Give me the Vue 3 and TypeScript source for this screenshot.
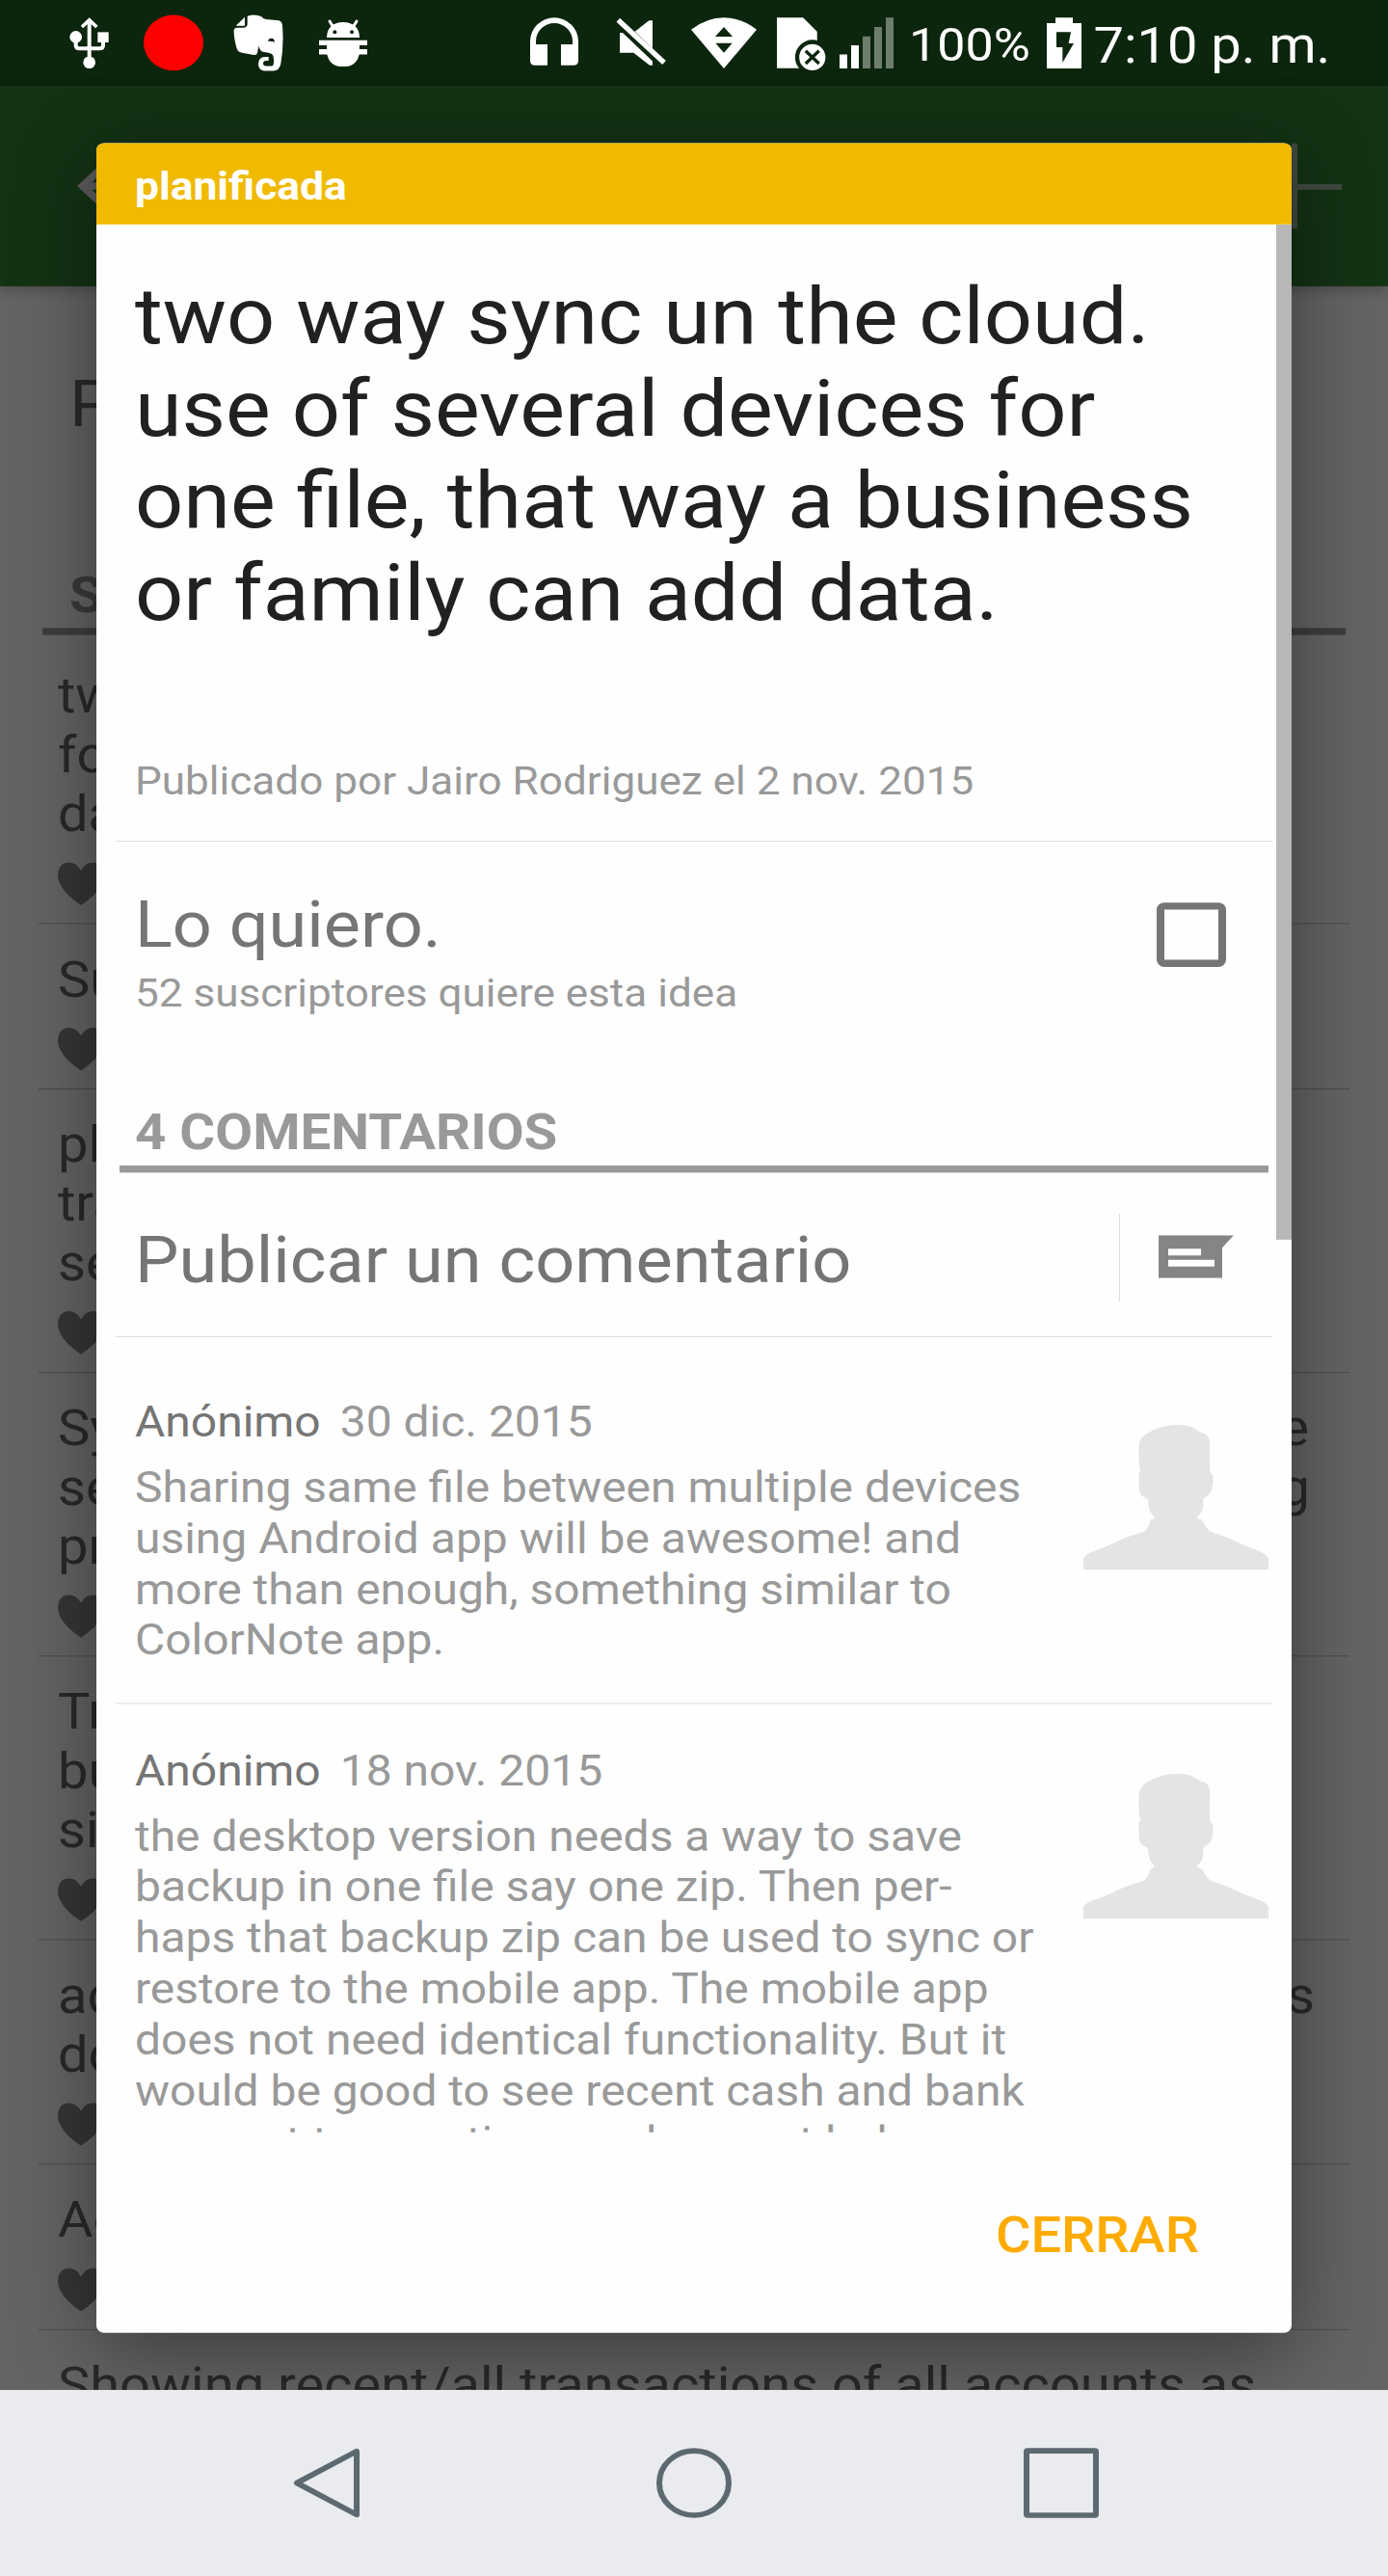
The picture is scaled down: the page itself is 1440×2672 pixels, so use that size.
<script setup lang="ts">
interface Idea {
  lines: { text: string; tail?: string; end?: number }[]
}

interface Comment {
  author: string
  date: string
  lines: string[]
}

// `tail` is pushed to the far side of a line that is `end` pixels wide
const ideas: Idea[] = [
  {
    lines: [
      { text: 'two way' },
      { text: 'for one' },
      { text: 'data.' },
    ],
  },
  { lines: [{ text: 'Sum' }] },
  { lines: [{ text: 'plan' }, { text: 'trans' }, { text: 'select' }] },
  {
    lines: [
      { text: 'Sync', tail: 'the', end: 1298 },
      { text: 'set', tail: 'using', end: 1299 },
      { text: 'pro' },
    ],
  },
  { lines: [{ text: 'Tra' }, { text: 'but' }, { text: 'sin' }] },
  { lines: [{ text: 'add', tail: 'as', end: 1304 }, { text: 'do' }] },
  { lines: [{ text: 'Add' }] },
  { lines: [{ text: 'Showing recent/all transactions of all accounts as' }] },
]

const titleLines: string[] = [
  'two way sync un the cloud.',
  'use of several devices for',
  'one file, that way a business',
  'or family can add data.',
]

const comments: Comment[] = [
  {
    author: 'Anónimo',
    date: '30 dic. 2015',
    lines: [
      'Sharing same file between multiple devices',
      'using Android app will be awesome! and',
      'more than enough, something similar to',
      'ColorNote app.',
    ],
  },
  {
    author: 'Anónimo',
    date: '18 nov. 2015',
    lines: [
      'the desktop version needs a way to save',
      'backup in one file say one zip. Then per-',
      'haps that backup zip can be used to sync or',
      'restore to the mobile app. The mobile app',
      'does not need identical functionality. But it',
      'would be good to see recent cash and bank',
      'account transactions and current balance',
    ],
  },
]
</script>

<template>
  <div class="viewport">
    <div class="device">
      <header class="status">
        <svg class="ic usb" viewBox="216 0 123 267" preserveAspectRatio="none">
          <g fill="none" stroke="#fff" stroke-width="12">
            <path d="M278 62V190" />
            <path d="M236 115V141Q236 151 247 151H310Q321 151 321 141V125" />
            <path d="M255 84L278 62L301 84" stroke-width="11" />
          </g>
          <circle cx="236" cy="115" r="19" fill="#fff" />
          <circle cx="278" cy="194" r="19" fill="#fff" />
          <path d="M304 100H338V132H304z" fill="#fff" />
        </svg>
        <svg class="ic rec" viewBox="447 0 186 267" preserveAspectRatio="none">
          <ellipse cx="540" cy="133" rx="93" ry="86.5" fill="#f00" />
        </svg>
        <svg class="ic evernote" viewBox="726 0 156 267" preserveAspectRatio="none">
          <path fill="#fff" d="M770 50Q795 42 814 52Q819 60 828 60L868 64Q878 67 879 80Q884 140 874 198Q870 220 850 220L822 220Q804 217 804 200Q804 177 825 177L836 177V189H827Q819 190 819 198Q819 205 828 205H846Q852 205 852 190Q852 172 846 168Q838 163 822 162Q808 160 806 143Q803 150 801 165Q799 172 790 171L748 163Q738 160 734 140Q727 110 728 93Q730 86 738 86L760 86Q770 85 770 76Z" />
          <path fill="#fff" d="M762 53V80H734Z" />
          <path fill="#0c250d" d="M834 128Q836 118 846 119Q854 120 855 131Q845 127 834 128Z" />
        </svg>
        <svg class="ic bug" viewBox="993 0 150 267" preserveAspectRatio="none">
          <path fill="#fff" d="M1017 117Q1018 70 1068 69Q1118 70 1119 117ZM993 125H1143V141H1119V153H1143V169H1118Q1110 207 1068 207Q1026 207 1018 169H993V153H1017V141H993Z" />
          <path d="M1026 66L1037 84M1110 66L1099 84" stroke="#fff" stroke-width="9" stroke-linecap="round" />
          <circle cx="1042" cy="100" r="6" fill="#0c250d" />
          <circle cx="1095" cy="100" r="6" fill="#0c250d" />
        </svg>

        <svg class="ic phones" viewBox="150 0 150 267" preserveAspectRatio="none">
          <path fill="#fff" d="M150 188V128A75 73 0 0 1 300 128V188Q300 203 285 203H246V138H282V128A57 56 0 0 0 168 128V138H204V203H165Q150 203 150 188Z" />
        </svg>
        <svg class="ic mute" viewBox="417 0 156 267" preserveAspectRatio="none">
          <path fill="#fff" d="M476 98L520 64H531V151ZM429 102H438L531 190V203H522L472 164H429Z" />
          <path d="M424 62L567 195" stroke="#fff" stroke-width="16" />
        </svg>
        <svg class="ic wifi" viewBox="651 0 204 267" preserveAspectRatio="none">
          <path fill="#fff" d="M651 92Q700 55 753 55Q806 55 855 92L753 213Z" />
          <path fill="#0c250d" d="M753 84L780 114H726ZM727 134H779L753 164Z" />
        </svg>
        <svg class="ic sim" viewBox="918 0 154 267" preserveAspectRatio="none">
          <path fill="#fff" d="M918 55H1000L1044 98V212H918Z" />
          <circle cx="1029" cy="178" r="54" fill="#0c250d" />
          <circle cx="1029" cy="178" r="41" fill="#fff" />
          <path d="M1008 158L1050 198M1050 158L1008 198" stroke="#0c250d" stroke-width="10" />
        </svg>
        <svg class="ic signal" viewBox="1113 0 168 267" preserveAspectRatio="none">
          <path fill="#fff" d="M1113 169H1137V213H1113ZM1149 141H1173V213H1149Z" />
          <path fill="#6d7d6e" d="M1185 113H1209V213H1185ZM1221 84H1245V213H1221ZM1257 55H1281V213H1257Z" />
        </svg>
        <span class="percent">100%</span>
        <svg class="ic battery" viewBox="378 0 108 267" preserveAspectRatio="none">
          <path fill="#fff" d="M378 72H405V55H459V72H486V213H378Z" />
          <path fill="#0c250d" d="M408 100H453L446 135H462L427 195V147H408Z" />
        </svg>
        <span class="clock">7:10 p. m.</span>
      </header>

      <div class="toolbar">
        <svg width="96" height="96" viewBox="0 0 24 24">
          <path fill="#5c5c5c" d="M20 11H7.83l5.59-5.59L12 4l-8 8 8 8 1.41-1.41L7.83 13H20v-2z" />
        </svg>
        <svg width="98" height="96" viewBox="0 0 98 96">
          <path d="M49 0V96M0 49H98" stroke="#414941" stroke-width="6" />
        </svg>
      </div>

      <main class="page">
        <div class="post">Pub</div>
        <div class="heading">SU</div>
        <ul class="ideas">
          <li v-for="(idea, i) in ideas" :key="i">
            <div
              v-for="(line, j) in idea.lines"
              :key="j"
              class="line"
              :style="line.end ? { width: line.end + 'px' } : undefined"
            >
              <span>{{ line.text }}</span>
              <span v-if="line.tail">{{ line.tail }}</span>
            </div>
            <svg class="heart" viewBox="0 0 48 48">
              <path fill="#363636" d="M24 9Q19 0 11 0Q0 1 0 16Q1 26 11 37Q17 43 24 48Q31 43 37 37Q47 26 48 16Q48 1 37 0Q29 0 24 9Z" />
            </svg>
          </li>
        </ul>
      </main>

      <nav class="navbar">
        <svg width="78" height="84" viewBox="0 0 78 84">
          <path d="M8 42L70 6.500V77.500Z" fill="none" stroke="#5c6971" stroke-width="6" stroke-linejoin="round" />
        </svg>
        <svg width="78" height="84" viewBox="0 0 78 84">
          <circle cx="39" cy="42" r="36" fill="none" stroke="#5c6971" stroke-width="6" />
        </svg>
        <svg width="78" height="84" viewBox="0 0 78 84">
          <rect x="3" y="6" width="72" height="72" rx="1" fill="none" stroke="#5c6971" stroke-width="6" />
        </svg>
      </nav>

      <section class="dialog">
        <div class="badge">planificada</div>
        <div class="scroll">
          <div class="bar"></div>
          <h1>
            <div v-for="line in titleLines" :key="line">{{ line }}</div>
          </h1>
          <p class="published">Publicado por Jairo Rodriguez el 2 nov. 2015</p>
          <div class="rule"></div>
          <div class="want">
            <div>
              <div class="want-title">Lo quiero.</div>
              <div class="want-count">52 suscriptores quiere esta idea</div>
            </div>
            <span class="box"></span>
          </div>
          <h2>4 COMENTARIOS</h2>
          <div class="write">
            <span class="write-label">Publicar un comentario</span>
            <span class="vrule"></span>
            <svg width="78" height="48" viewBox="0 0 78 48">
              <path fill="#858585" fill-rule="evenodd" d="M0 0H78L66 14V48H0ZM10 15V22.500H44V15ZM10 27.500V35H58V27.500Z" />
            </svg>
          </div>
          <div class="rule"></div>
          <template v-for="(c, i) in comments" :key="i">
            <article class="comment" :class="{ first: i === 0 }">
              <div class="text">
                <div class="meta"><span class="author">{{ c.author }}</span><span>{{ c.date }}</span></div>
                <div v-for="line in c.lines" :key="line">{{ line }}</div>
              </div>
              <svg class="avatar" viewBox="0 0 192 162">
                <path fill="#e3e4e6" d="M97.700 0Q111 0 119.300 7Q121 9 125 9.500Q131 12 131.300 22Q130.500 38 131.300 53Q135 56 134.500 64Q133.500 78 127 80.500L124.300 83V92Q123 99 118 102.500L119 105.500Q123 105 125.500 111Q129 118 133 120L149.300 126L169.300 135.700L184.300 142Q190 145 192 149V162H0V149Q3 144 10 141.500L22.700 136.500L42.700 126.500L62 119.800Q67 117 69 108Q70 105 73.300 105.500V102.500Q68.500 98 68 92L66.700 83Q60 80 58.500 76Q57 68 57.500 55.500L59 51Q57 44 57.500 24Q58 14 66 9.600Q80 0 97.700 0Z" />
              </svg>
            </article>
            <div class="rule"></div>
          </template>
        </div>
        <footer>
          <button type="button">CERRAR</button>
        </footer>
      </section>
    </div>
  </div>
</template>

<style>
body {
  margin: 0;
}
</style>

<style scoped>
.viewport {
  width: 1440px;
  height: 2672px;
  overflow: hidden;
}
/* The 4x density canvas is 2880 tall and is squeezed to the viewport height */
.device {
  position: relative;
  display: flex;
  flex-direction: column;
  width: 1440px;
  height: 2880px;
  transform: scaleY(0.927778);
  transform-origin: 0 0;
  font-family: Roboto, "Liberation Sans", sans-serif;
  background: #646464;
  overflow: hidden;
}
h1,
h2,
p,
ul {
  margin: 0;
  padding: 0;
}
.status {
  display: flex;
  flex: none;
  height: 96px;
  background: #0c250d;
  color: #fff;
  white-space: nowrap;
}
.ic {
  flex: none;
  height: 96px;
}
.usb { width: 41px; margin-left: 72px; }
.rec { width: 62px; margin-left: 36px; }
.evernote { width: 52px; margin-left: 31px; }
.bug { width: 50px; margin-left: 37px; }
.phones { width: 50px; margin-left: 169px; }
.mute { width: 52px; margin-left: 39px; }
.wifi { width: 68px; margin-left: 26px; }
.sim { width: 51px; margin-left: 21px; }
.signal { width: 56px; margin-left: 14px; }
.percent {
  width: 123px;
  margin-left: 16px;
  font-size: 52px;
  line-height: 61px;
  margin-top: 20px;
}
.battery { width: 36px; margin-left: 20px; }
.clock {
  margin-left: 12.5px;
  font-size: 56px;
  line-height: 66px;
  margin-top: 18px;
}
.toolbar {
  position: relative;
  z-index: 1;
  display: flex;
  flex: none;
  box-sizing: border-box;
  height: 224px;
  padding: 64px 48px 0 64px;
  justify-content: space-between;
  background: #143214;
  box-shadow: 0 3px 14px rgba(0, 0, 0, 0.3);
}
.page {
  flex: 1;
  min-height: 0;
  overflow: hidden;
}
.post {
  padding: 90px 72px 0;
  font-size: 72px;
  line-height: 84px;
  color: #2b2b2b;
}
.heading {
  margin: 137.500px 44px 6px;
  padding: 0 28px 4px;
  border-bottom: 8px solid #3e3e3e;
  font-size: 56px;
  line-height: 66px;
  font-weight: 700;
  color: #3a3a3a;
}
.ideas {
  list-style: none;
  margin: 0 40px;
}
.ideas li {
  box-sizing: border-box;
  padding: 29px 20px 20px;
  border-bottom: 1px solid #4a4a4a;
  font-size: 56px;
  line-height: 66px;
  color: #292929;
}
.line {
  display: flex;
  justify-content: space-between;
  white-space: nowrap;
}
.heart {
  display: block;
  width: 48px;
  height: 48px;
  margin-top: 21px;
}
.navbar {
  display: flex;
  flex: none;
  height: 208px;
  padding: 0 300px;
  align-items: center;
  justify-content: space-between;
  background: #e9ebef;
  position: relative;
  z-index: 3;
}
.dialog {
  position: absolute;
  z-index: 2;
  left: 100px;
  top: 160px;
  width: 1240px;
  height: 2448px;
  display: flex;
  flex-direction: column;
  border-radius: 8px;
  background: #fefefe;
  box-shadow: 0 20px 90px rgba(0, 0, 0, 0.42);
}
.badge {
  flex: none;
  padding: 23px 40px 17px;
  border-radius: 8px 8px 0 0;
  background: #f0ba00;
  color: #fff;
  font-size: 44.4px;
  line-height: 51px;
  font-weight: 700;
}
.scroll {
  position: relative;
  flex: none;
  height: 2133px;
  overflow: hidden;
  color: #999;
}
.bar {
  position: absolute;
  top: 0;
  right: 0;
  width: 16px;
  height: 1135px;
  background: #b7b7b7;
}
h1 {
  padding: 52px 0 0 40px;
  font-size: 88.15px;
  line-height: 103px;
  font-weight: 400;
  color: #212121;
  white-space: nowrap;
}
.published {
  margin: 132px 0 41px 40px;
  font-size: 44.08px;
  line-height: 52px;
}
.rule {
  height: 1px;
  margin: 0 20px;
  background: #dcdcdc;
}
.want {
  display: flex;
  justify-content: space-between;
  padding: 51px 68px 0 40px;
}
.want-title {
  font-size: 72px;
  line-height: 84px;
  color: #757575;
}
.want-count {
  margin-top: 8px;
  font-size: 44.08px;
  line-height: 52px;
}
.box {
  box-sizing: border-box;
  width: 72px;
  height: 72px;
  margin-top: 17px;
  border: 8px solid #757575;
  border-radius: 8px;
}
h2 {
  margin: 97px 24px 0;
  padding: 0 16px 4px;
  border-bottom: 8px solid #999;
  font-size: 56.4px;
  line-height: 66px;
  font-weight: 700;
}
.write {
  display: flex;
  height: 183px;
  align-items: flex-start;
  padding: 0 60px 0 40px;
}
.write-label {
  flex: 1;
  margin-top: 56px;
  font-size: 72.1px;
  line-height: 84px;
  color: #757575;
}
.vrule {
  width: 1px;
  height: 98px;
  margin: 46px 40px 0 0;
  background: #dcdcdc;
}
.write svg {
  margin-top: 70px;
}
.comment {
  display: flex;
  justify-content: space-between;
  padding: 46px 24px 42px 40px;
  font-size: 47.97px;
  line-height: 57px;
  white-space: nowrap;
}
.comment.first {
  padding-top: 66px;
}
.meta {
  display: flex;
  gap: 20px;
  margin-bottom: 16px;
}
.author {
  color: #757575;
}
.avatar {
  flex: none;
  width: 192px;
  height: 162px;
  margin-top: 32px;
}
footer {
  display: flex;
  flex: 1;
  justify-content: flex-end;
  align-items: flex-start;
  padding: 82px 96px 0 0;
}
button {
  padding: 0;
  border: 0;
  background: none;
  font: 500 56px/66px Roboto, "Liberation Sans", sans-serif;
  color: #ffab00;
}
</style>
